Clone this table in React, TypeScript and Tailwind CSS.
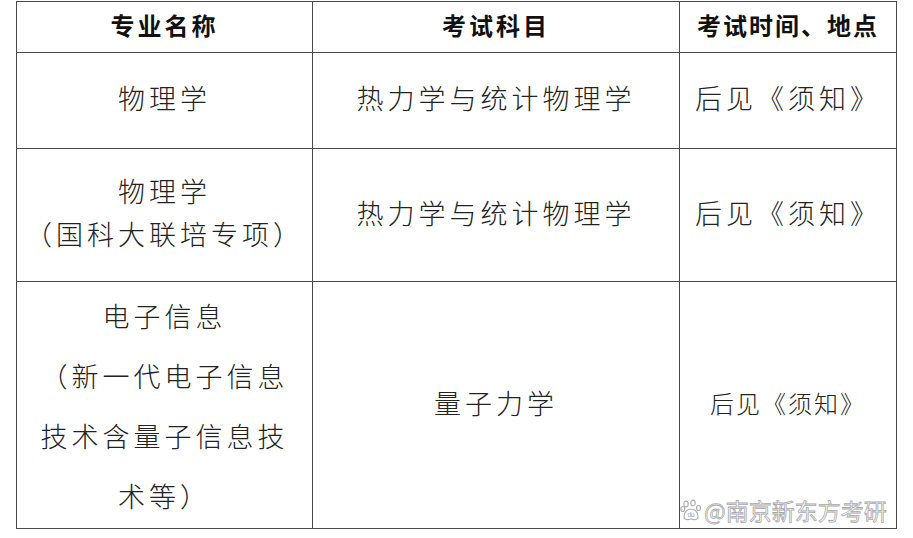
import React from "react";

const cjk = "font-['Liberation_Serif','Noto_Sans_CJK_SC',serif]";

function Paw() {
  return (
    <svg width="22" height="22" viewBox="0 0 22 22" className="shrink-0">
      <g fill="#fff" stroke="#b0b0b0" strokeWidth="1.2">
        <ellipse cx="6" cy="5" rx="2.2" ry="2.8" />
        <ellipse cx="13" cy="4" rx="2.2" ry="2.8" />
        <ellipse cx="2.8" cy="10" rx="2" ry="2.5" />
        <ellipse cx="18.5" cy="9" rx="2" ry="2.5" />
        <path d="M4 18 C4 12 8 10 11 10 C14 10 18 12 18 18 C18 21 14 21 11 20 C8 21 4 21 4 18 Z" />
      </g>
      <text x="11" y="18" textAnchor="middle" fontSize="6.5" fill="#999" fontFamily="Liberation Sans, sans-serif">du</text>
    </svg>
  );
}

export default function App() {
  const cell = "border-[1.5px] border-[#4a4a4a] text-center align-middle p-0";
  const body = "text-[27px] font-light tracking-[4px] text-[#222]";
  return (
    <div className={`relative w-[913px] h-[538px] bg-white ${cjk}`}>
      <div className="pt-[1px] pl-[16px]">
        <table className="border-collapse table-fixed w-[880px]">
          <colgroup>
            <col className="w-[296px]" />
            <col className="w-[367px]" />
            <col className="w-[217px]" />
          </colgroup>
          <tbody>
            <tr className="h-[51px]">
              <td className={`${cell} text-[24px] font-bold tracking-[3px] text-[#111]`}>专业名称</td>
              <td className={`${cell} text-[24px] font-bold tracking-[3px] text-[#111]`}>考试科目</td>
              <td className={`${cell} text-[24px] font-bold tracking-[2px] text-[#111]`}>考试时间、地点</td>
            </tr>
            <tr className="h-[96px]">
              <td className={`${cell} ${body}`}>物理学</td>
              <td className={`${cell} ${body}`}>热力学与统计物理学</td>
              <td className={`${cell} ${body}`}>后见《须知》</td>
            </tr>
            <tr className="h-[133px]">
              <td className={`${cell} ${body} leading-[43px]`}>
                物理学
                <br />
                （国科大联培专项）
              </td>
              <td className={`${cell} ${body}`}>热力学与统计物理学</td>
              <td className={`${cell} ${body}`}>后见《须知》</td>
            </tr>
            <tr className="h-[247px]">
              <td className={`${cell} ${body} leading-[60px] pt-[6px]`}>
                电子信息
                <br />
                （新一代电子信息
                <br />
                技术含量子信息技
                <br />
                术等）
              </td>
              <td className={`${cell} ${body}`}>量子力学</td>
              <td className={`${cell} text-[24px] font-light tracking-[2px] text-[#222]`}>后见《须知》</td>
            </tr>
          </tbody>
        </table>
      </div>
      <div className="absolute left-[680px] top-[493px] flex items-center gap-[2px] text-[23px] text-white font-['Noto_Sans_CJK_SC',sans-serif] [-webkit-text-stroke:0.8px_#a8a8a8]">
        <Paw />
        <span>@南京新东方考研</span>
      </div>
    </div>
  );
}
